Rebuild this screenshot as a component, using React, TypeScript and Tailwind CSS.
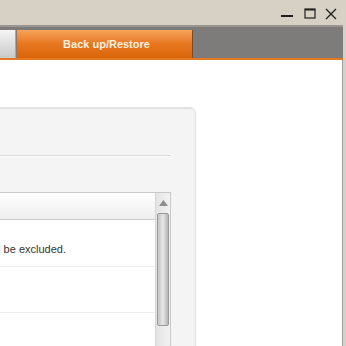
import React from 'react';

const App: React.FC = () => {
  return (
    <div className="w-[346px] h-[346px] overflow-hidden bg-[#d6d0c5] flex flex-col font-['Liberation_Sans',Arial,sans-serif]">
      {/* title bar */}
      <div className="h-[25px] shrink-0 flex items-start justify-end pr-[9px] pt-[8px] gap-[9px]">
        <svg width="13" height="12" viewBox="0 0 13 12" className="mr-[1px]">
          <rect x="0" y="7" width="12" height="2" fill="#1f1f1f" />
        </svg>
        <svg width="12" height="12" viewBox="0 0 12 12">
          <rect x="1" y="1" width="10" height="9" fill="none" stroke="#1f1f1f" strokeWidth="1.2" />
          <rect x="1" y="1" width="10" height="1.5" fill="#1f1f1f" />
        </svg>
        <svg width="12" height="12" viewBox="0 0 12 12">
          <path d="M1 1 L11 11 M11 1 L1 11" stroke="#1f1f1f" strokeWidth="1.3" />
        </svg>
      </div>
      <div className="h-[2px] shrink-0 bg-[#9a958f] mr-[3px]" />

      {/* tab strip */}
      <div className="h-[31px] shrink-0 bg-[#7e7c7a] mr-[3px] flex items-end pt-[3px]">
        <div className="w-[16px] h-full bg-gradient-to-b from-[#f6f6f6] to-[#c9c9c9] border-r border-[#a8a8a8]" />
        <div className="w-[176px] h-full ml-[1px] bg-gradient-to-b from-[#f6a45a] via-[#e7761c] to-[#da6508] border-r border-[#8a4a18] flex items-center justify-center">
          <span className="text-[#fdf0e2] text-[11px] font-bold pl-[4px]">Back up/Restore</span>
        </div>
      </div>
      <div className="h-[2px] shrink-0 bg-[#e27a24] mr-[3px]" />

      {/* content */}
      <div className="flex-1 bg-white mr-[3px] border-r border-[#9c9c9c] pt-[47px]">
        <div className="w-[196px] h-full bg-[#f4f4f4] border-t-2 border-r border-[#e2e2e2] rounded-tr-[6px] pt-[46px]">
          <div className="w-[170px] h-[2px] bg-[#dadada] border-b border-white" />
          <div className="mt-[35px] w-[171px] h-full bg-white border-t border-r border-[#c8c8c8] flex">
            <div className="flex-1 flex flex-col">
              <div className="h-[27px] bg-gradient-to-b from-white to-[#efefef] border-b border-[#cdcdcd]" />
              <div className="h-[47px] border-b border-[#ececec] flex items-center">
                <div className="w-[66px] overflow-hidden whitespace-nowrap flex justify-end text-[11px] text-[#333] pt-[13px]">
                  <span>Files larger than this size will be excluded.</span>
                </div>
              </div>
              <div className="h-[46px] border-b border-[#ececec]" />
            </div>
            <div className="w-[15px] bg-gradient-to-r from-[#e4e4e4] to-[#f2f2f2] border-l border-[#d6d6d6] flex flex-col items-center">
              <div className="h-[20px] flex items-center justify-center">
                <svg width="9" height="6" viewBox="0 0 9 6">
                  <path d="M4.5 0 L9 6 L0 6 Z" fill="#8e8e8e" />
                </svg>
              </div>
              <div className="w-[12px] h-[113px] rounded-[2px] border border-[#9a9a9a] bg-gradient-to-r from-[#c4c4c4] via-[#e6e6e6] to-[#b4b4b4]" />
            </div>
          </div>
        </div>
      </div>
    </div>
  );
};

export default App;
